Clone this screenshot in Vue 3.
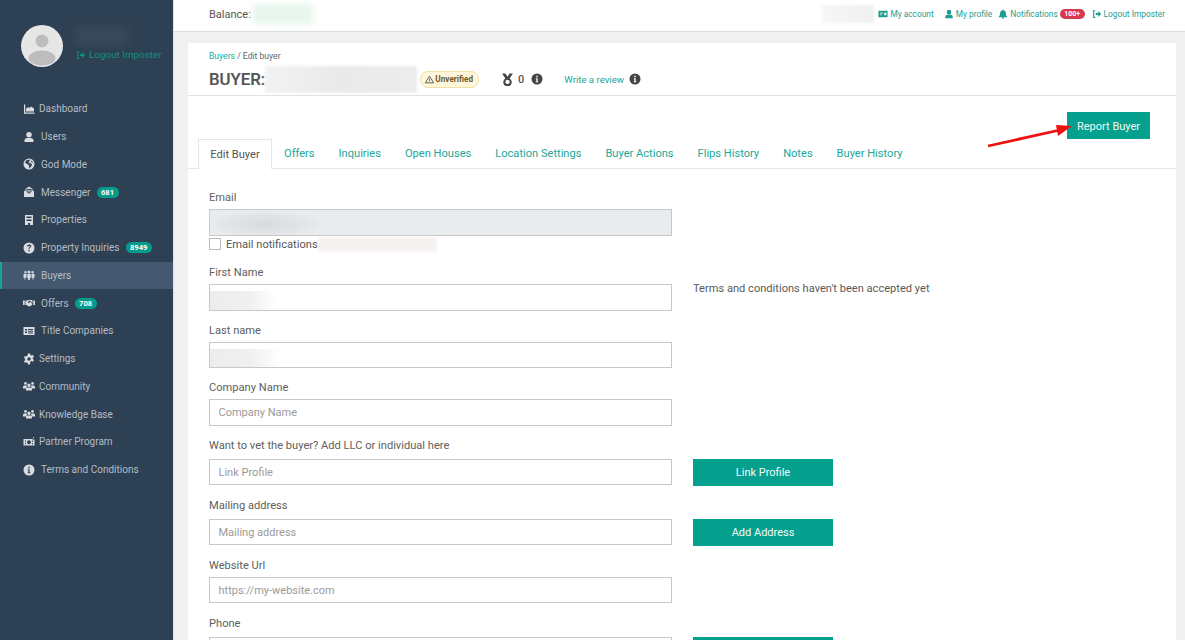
<script setup>
const nav = [
  { label: 'Dashboard', icon: 'chart', tight: true },
  { label: 'Users', icon: 'user' },
  { label: 'God Mode', icon: 'globe' },
  { label: 'Messenger', icon: 'mail', badge: '681' },
  { label: 'Properties', icon: 'building' },
  { label: 'Property Inquiries', icon: 'question', badge: '8949' },
  { label: 'Buyers', icon: 'people', active: true },
  { label: 'Offers', icon: 'handshake', badge: '708' },
  { label: 'Title Companies', icon: 'card' },
  { label: 'Settings', icon: 'cog', tight: true },
  { label: 'Community', icon: 'group', tight: true },
  { label: 'Knowledge Base', icon: 'group', tight: true },
  { label: 'Partner Program', icon: 'money', tight: true },
  { label: 'Terms and Conditions', icon: 'info' },
]
const tabs = ['Offers', 'Inquiries', 'Open Houses', 'Location Settings', 'Buyer Actions', 'Flips History', 'Notes', 'Buyer History']
</script>

<template>
  <div class="app">
    <aside class="sidebar">
      <div class="profile">
        <svg class="avatar" viewBox="0 0 42 42">
          <circle cx="21" cy="21" r="21" fill="#e6e6e6" />
          <circle cx="21" cy="16" r="6.5" fill="#bdbdbd" />
          <ellipse cx="21" cy="33" rx="13.5" ry="7.5" fill="#bdbdbd" />
        </svg>
        <div class="who">
          <span class="blur-name"></span>
          <a class="imposter">
            <svg class="i11" viewBox="0 0 24 24"><path d="M8 4H4v16h4" fill="none" stroke="currentColor" stroke-width="2.6" /><path d="M9 9.5h6V5l7 7-7 7v-4.500H9z" fill="currentColor" /></svg>
            Logout Imposter
          </a>
        </div>
      </div>
      <nav class="nav">
        <a v-for="item in nav" :key="item.label" class="nav-item" :class="{ active: item.active, tight: item.tight }">
          <svg class="nav-icon" viewBox="0 0 24 24" fill="currentColor">
            <path v-if="item.icon === 'chart'" d="M2 3h2.500v16H23v2.500H2zM6 17v-5l4-4 3 2 3-3 6 4v6z" />
            <path v-else-if="item.icon === 'user'" d="M12 2a5.500 5.500 0 1 1 0 11 5.500 5.500 0 0 1 0-11zM3 22v-3c0-3 2.500-5 5-5h8c2.500 0 5 2 5 5v3z" />
            <path v-else-if="item.icon === 'globe'" fill-rule="evenodd" d="M12 1a11 11 0 1 1 0 22 11 11 0 0 1 0-22zM6 5 4 9l4 3 3 1 1 3 1 5 4-5 1-4-5-2-2-2 3-3-1-2zM17 5l-1 3 4 2-1-3z" />
            <path v-else-if="item.icon === 'mail'" fill-rule="evenodd" d="M12 1 19 6v3l3 1.500V22H2V10.500L5 9V6zM7 6v6l5 3.500L17 12V6zM8.500 8h7v1.500h-7zM8.500 11h7v1.500h-7z" />
            <path v-else-if="item.icon === 'building'" fill-rule="evenodd" d="M4 2h16v20h-6v-4h-4v4H4zM7 5v3h10V5zM7 11v3h10v-3z" />
            <path v-else-if="item.icon === 'question'" fill-rule="evenodd" d="M12 1a11 11 0 1 1 0 22 11 11 0 0 1 0-22zM8 9h2.500c.2-1 .8-1.500 1.600-1.500 1 0 1.600.6 1.600 1.300 0 1.500-3 1.700-3 4.700h2.500c0-2 3.300-2.200 3.300-4.900C16.500 6.300 14.500 5 12 5S8.200 6.500 8 9zM10.700 15.500v3h2.600v-3z" />
            <path v-else-if="item.icon === 'people'" d="M5 4a2.500 2.500 0 1 1 0 5 2.500 2.500 0 0 1 0-5zM12 3a3 3 0 1 1 0 6 3 3 0 0 1 0-6zM19 4a2.500 2.500 0 1 1 0 5 2.500 2.500 0 0 1 0-5zM1 10h6v7H5v4H3v-4H1zM8.500 10h7v8h-1.700v4h-3.600v-4H8.500zM17 10h6v7h-2v4h-2v-4h-2z" />
            <path v-else-if="item.icon === 'handshake'" d="M0 7h3.500v9H0zM20.500 7H24v9h-3.500zM5 7h4l3-1.500L14.500 6.500l-5 3.500c0 2 2 2.500 3.500 1l2-1 4 4-1.500 2.500-2 1-2 1.500-2.500-.5L5 15zM15.500 5.500 19 7v5l-4-3.500-1.500-2z" />
            <path v-else-if="item.icon === 'card'" fill-rule="evenodd" d="M1 4h22v16H1zM4 8v3h4V8zM4 13v3h4v-3zM10 8v2h10V8zM10 11.500v2h10v-2zM10 15v2h10v-2z" />
            <path v-else-if="item.icon === 'cog'" fill-rule="evenodd" d="M10 1h4l.7 3 2.500 1.200 2.800-1.400 2 3.400-2.300 2 .1 2.800 2.200 2-2 3.400-2.800-1.300-2.500 1.400L14 23h-4l-.7-3-2.500-1.400-2.800 1.300-2-3.400 2.200-2V12l-2.200-2.800 2-3.400 2.800 1.400L9.300 4zM12 8.500a3.500 3.500 0 1 0 0 7 3.500 3.500 0 0 0 0-7z" />
            <path v-else-if="item.icon === 'group'" d="M5 4a2.800 2.800 0 1 1 0 5.600A2.800 2.800 0 0 1 5 4zM19 4a2.800 2.800 0 1 1 0 5.600A2.800 2.800 0 0 1 19 4zM12 7a3.400 3.400 0 1 1 0 6.800A3.400 3.400 0 0 1 12 7zM0 17v-3c0-2 1.500-3 3-3h4l1 2-2 4zM24 17v-3c0-2-1.500-3-3-3h-4l-1 2 2 4zM6 21v-3c0-2 2-3 3.500-3h5c1.500 0 3.500 1 3.500 3v3z" />
            <path v-else-if="item.icon === 'money'" fill-rule="evenodd" d="M1 6h19l-1 2 4-1v12H1zM12 8.500a4 4 0 1 0 0 8 4 4 0 0 0 0-8zM4 9v2.500h2V9zM4 14v2.500h2V14zM18 9v2.500h2V9zM18 14v2.500h2V14zM20 2h1.500v3H20z" />
            <path v-else fill-rule="evenodd" d="M12 1a11 11 0 1 1 0 22 11 11 0 0 1 0-22zM10.500 5.500v3h3v-3zM9.500 10.500v2h1.200v4H9.500v2h5v-2h-1.200v-6z" />
          </svg>
          <span>{{ item.label }}</span>
          <b v-if="item.badge" class="badge">{{ item.badge }}</b>
        </a>
      </nav>
    </aside>

    <main class="main">
      <header class="topbar">
        <div class="balance">Balance: <span class="blur-balance"></span></div>
        <div class="links">
          <span class="blur-top"></span>
          <a>
            <svg class="i10" viewBox="0 0 24 24" fill="currentColor"><path fill-rule="evenodd" d="M1 4h22v16H1zM5 9v2h7V9zM5 13v2h4v-2zM15 9v6h5V9z" /></svg>
            My account
          </a>
          <a class="gap-profile">
            <svg class="i10" viewBox="0 0 24 24" fill="currentColor"><path d="M12 2a5.500 5.500 0 1 1 0 11 5.500 5.500 0 0 1 0-11zM3 22v-3c0-3 2.500-5 5-5h8c2.500 0 5 2 5 5v3z" /></svg>
            My profile
          </a>
          <a>
            <svg class="i10" viewBox="0 0 24 24" fill="currentColor"><path d="M12 1c1 0 1.500.8 1.500 1.800C17 3.500 19 6.500 19 10c0 4 1 6 3 8v1.500H2V18c2-2 3-4 3-8 0-3.500 2-6.500 5.500-7.200C10.500 1.800 11 1 12 1zM9 20.500h6a3 3 0 0 1-6 0z" /></svg>
            Notifications
            <b class="badge-red">100+</b>
          </a>
          <a class="gap-logout">
            <svg class="i10" viewBox="0 0 24 24"><path d="M8 4H4v16h4" fill="none" stroke="currentColor" stroke-width="2.6" /><path d="M9 9.500h6V5l7 7-7 7v-4.500H9z" fill="currentColor" /></svg>
            Logout Imposter
          </a>
        </div>
      </header>

      <section class="card">
        <div class="head">
          <div class="crumbs"><a>Buyers</a> / Edit buyer</div>
          <div class="title-row">
            <h1>BUYER:</h1>
            <span class="blur-title"></span>
            <span class="pill">
              <svg class="i9" viewBox="0 0 24 24"><path d="M12 3 23 21H1z" fill="none" stroke="currentColor" stroke-width="2.200" /><path d="M11 9h2v6h-2zM11 16.500h2v2h-2z" fill="currentColor" /></svg>
              Unverified
            </span>
            <svg class="medal" viewBox="0 0 24 24" fill="#444"><path d="M2 1h6l4 6 4-6h6l-6 9.300a7.800 7.800 0 1 1-8 0zM12 12.500a4 4 0 1 0 0 8 4 4 0 0 0 0-8z" fill-rule="evenodd" /></svg>
            <span class="count">0</span>
            <svg class="info first-info" viewBox="0 0 24 24" fill="#444"><path fill-rule="evenodd" d="M12 1a11 11 0 1 1 0 22 11 11 0 0 1 0-22zM10.500 5.500v3h3v-3zM9.500 10.500v2h1.200v4H9.500v2h5v-2h-1.200v-6z" /></svg>
            <a class="review">Write a review</a>
            <svg class="info last-info" viewBox="0 0 24 24" fill="#444"><path fill-rule="evenodd" d="M12 1a11 11 0 1 1 0 22 11 11 0 0 1 0-22zM10.500 5.500v3h3v-3zM9.500 10.500v2h1.200v4H9.500v2h5v-2h-1.200v-6z" /></svg>
          </div>
        </div>

        <div class="actions">
          <button class="btn report">Report Buyer</button>
          <svg class="arrow" viewBox="0 0 90 30"><path d="M1 26 73 10" stroke="#f01010" stroke-width="2.800" fill="none" /><path d="M85 6 69 5 71 16z" fill="#f01010" /></svg>
        </div>

        <div class="tabs">
          <a class="tab current">Edit Buyer</a>
          <a v-for="t in tabs" :key="t" class="tab">{{ t }}</a>
        </div>

        <form class="form" @submit.prevent>
          <div class="row h46">
            <div class="field">
              <label>Email</label>
              <div class="input disabled"><span class="blur-email"></span></div>
            </div>
          </div>
          <div class="check-row">
            <span class="check"></span>
            <span>Email notifications</span>
            <span class="blur-check"></span>
          </div>
          <div class="row first">
            <div class="field">
              <label>First Name</label>
              <div class="input"><span class="blur-field w1"></span></div>
            </div>
            <p class="terms">Terms and conditions haven't been accepted yet</p>
          </div>
          <div class="row">
            <div class="field">
              <label>Last name</label>
              <div class="input short"><span class="blur-field w2"></span></div>
            </div>
          </div>
          <div class="row h57">
            <div class="field">
              <label>Company Name</label>
              <input placeholder="Company Name" />
            </div>
          </div>
          <div class="row tall">
            <div class="field">
              <label>Want to vet the buyer? Add LLC or individual here</label>
              <input class="short" placeholder="Link Profile" />
            </div>
            <button class="btn side">Link Profile</button>
          </div>
          <div class="row tall">
            <div class="field">
              <label>Mailing address</label>
              <input class="short" placeholder="Mailing address" />
            </div>
            <button class="btn side">Add Address</button>
          </div>
          <div class="row">
            <div class="field">
              <label>Website Url</label>
              <input class="short" placeholder="https://my-website.com" />
            </div>
          </div>
          <div class="row tall">
            <div class="field">
              <label>Phone</label>
              <input />
            </div>
            <button class="btn side"></button>
          </div>
        </form>
      </section>
    </main>
  </div>
</template>

<style>
html, body { margin: 0; overflow: hidden; }
</style>

<style scoped>
.app {
  display: flex;
  width: 1185px;
  height: 640px;
  overflow: hidden;
  font-family: Roboto, "Liberation Sans", sans-serif;
  color: #565656;
  background: #f0f0f0;
}
a { color: #1aa697; text-decoration: none; }

.sidebar {
  flex: 0 0 173px;
  background: #2e4053;
  color: #b4bdc6;
  border-right: 1px solid #e2e2e2;
}
.profile { display: flex; height: 95px; padding: 25px 0 0 21px; box-sizing: border-box; }
.avatar { width: 42px; height: 42px; flex: none; }
.who { margin-left: 13px; display: flex; flex-direction: column; }
.blur-name { width: 52px; height: 18px; margin: 2px 0 0 0; background: #384a5a; filter: blur(4px); }
.imposter { display: flex; align-items: center; gap: 3px; margin-top: 4px; font-size: 9.9px; color: #12907f; white-space: nowrap; }
.i11 { width: 10px; height: 10px; }

.nav-item {
  display: flex;
  align-items: center;
  height: 27.75px;
  padding-left: 23px;
  color: #b4bdc6;
  font-size: 10px;
  white-space: nowrap;
  box-sizing: border-box;
}
.nav-item.active { background: #44596f; border-left: 2px solid #16a394; padding-left: 21px; }
.nav-icon { width: 12px; height: 12px; flex: none; margin-right: 6px; color: #d9dde1; }
.nav-item.tight .nav-icon { margin-right: 4px; }
.badge {
  margin-left: 6px;
  padding: 0 4.5px;
  height: 11px;
  line-height: 11px;
  border-radius: 6px;
  background: #069c8c;
  color: #fff;
  font-size: 7.6px;
  font-weight: 700;
}

.main { flex: 1; min-width: 0; display: flex; flex-direction: column; }
.topbar {
  flex: none;
  height: 32px;
  box-sizing: border-box;
  background: #fff;
  border-bottom: 1px solid #dcdcdc;
  display: flex;
  align-items: center;
  justify-content: space-between;
  padding: 0 20px 3px 35px;
  font-size: 11px;
}
.balance { display: flex; align-items: center; gap: 2px; }
.blur-balance { width: 60px; height: 20px; background: #e7f5ec; filter: blur(3px); }
.links { display: flex; align-items: center; gap: 6px; font-size: 8.35px; }
.links a { display: flex; align-items: center; gap: 2px; color: #1f9e90; white-space: nowrap; }
.links a.gap-profile { margin-left: 4px; }
.links a.gap-logout { margin-left: 1px; }
.blur-top { width: 52px; height: 18px; margin-right: -2px; background: linear-gradient(90deg, #f7f7f7, #f0f0f0); filter: blur(1px); }
.i10 { width: 10px; height: 10px; flex: none; }
.badge-red {
  padding: 0 4.5px;
  height: 10px;
  line-height: 10px;
  border-radius: 5px;
  background: #d9374f;
  color: #fff;
  font-size: 7px;
}

.card {
  position: relative;
  margin: 11px 9px 0 14px;
  background: #fff;
  flex: 1;
  min-height: 0;
  overflow: hidden;
}
.head { height: 53px; box-sizing: border-box; padding: 8px 0 0 21px; border-bottom: 1px solid #e3e3e3; }
.crumbs { font-size: 8.6px; line-height: 11px; color: #666; }
.title-row { display: flex; align-items: center; height: 28px; margin-top: 3px; }
h1 { margin: 0; font-size: 16.8px; font-weight: 500; color: #555; -webkit-text-stroke: 0.2px #555; }
.blur-title { width: 152px; height: 27px; background: linear-gradient(90deg, #f2f2f2, #e9e9e9 50%, #ececec); filter: blur(1.5px); }
.pill {
  display: flex;
  align-items: center;
  gap: 1px;
  margin-left: 3px;
  height: 15px;
  padding: 0 5px 0 4px;
  border: 1px solid #f2dfa6;
  background: #fff6dc;
  border-radius: 8px;
  font-size: 8.2px;
  font-weight: 700;
  color: #6d5b2e;
  white-space: nowrap;
}
.i9 { width: 9px; height: 9px; color: #444; }
.medal { width: 13px; height: 13px; margin-left: 22px; }
.count { margin-left: 4px; font-size: 11px; font-weight: 500; }
.info { width: 12px; height: 12px; margin-left: 6px; }
.first-info { margin-left: 7px; }
.last-info { margin-left: 5px; }
.review { margin-left: 21px; font-size: 9.6px; white-space: nowrap; }

.actions { display: flex; justify-content: flex-end; position: relative; padding: 16px 26px 0 0; height: 27px; }
.btn {
  border: 0;
  background: #06a08f;
  color: #f2fbfa;
  font: 400 11px Roboto, "Liberation Sans", sans-serif;
  padding: 0;
}
.report { width: 83px; height: 27px; padding-top: 1px; }
.arrow { position: absolute; left: 799px; top: 24px; width: 90px; height: 30px; }

.tabs { display: flex; height: 29px; padding-left: 10px; border-bottom: 1px solid #e6e6e6; font-size: 11.1px; }
.tab { display: flex; align-items: center; padding: 0 12px; color: #21a797; white-space: nowrap; }
.tab.current { width: 74px; height: 30px; box-sizing: border-box; color: #555; background: #fff; border: 1px solid #e6e6e6; border-bottom: 0; justify-content: center; padding: 0; }

.form { padding: 21px 0 0 21px; font-size: 11.12px; }
.row { display: flex; align-items: flex-end; gap: 21px; height: 58px; }
.row.h46 { height: 46px; }
.row.h57 { height: 57px; }
.row.first { height: 60px; }
.row.tall { height: 60px; }
.field { width: 463px; flex: none; }
label { display: block; height: 17px; line-height: 12px; color: #606060; white-space: nowrap; }
.row.tall label { height: 19px; }
.input, input {
  display: block;
  width: 100%;
  height: 27px;
  box-sizing: border-box;
  border: 1px solid #c8c8c8;
  background: #fff;
  font: 11px Roboto, "Liberation Sans", sans-serif;
  padding: 0 8.5px;
  overflow: hidden;
}
.input.short, input.short { height: 26px; margin-bottom: 1px; }
input::placeholder { color: #9a9a9a; opacity: 1; }
.input { display: flex; align-items: center; padding: 0; }
.input.disabled { background: #e9ecef; }
.blur-email { width: 110px; height: 24px; margin-left: 0; background: radial-gradient(ellipse at 50% 55%, #d8dbde 0, #e2e5e8 50%, #e9ecef 75%); }
.blur-field { height: 19px; margin-top: 6px; background: linear-gradient(90deg, #ececec, #f0f0f0 60%, #fff); }
.w1 { width: 66px; }
.w2 { width: 70px; }
.check-row { display: flex; align-items: center; height: 14px; margin-top: 1px; }
.check { width: 10px; height: 10px; border: 1px solid #bbb; margin-right: 5px; }
.blur-check { width: 119px; height: 15px; background: #f7f2f2; filter: blur(1px); }
.terms { margin: 0 0 16px; font-size: 11.1px; white-space: nowrap; color: #5a5a5a; }
.btn.side { width: 140px; height: 27px; flex: none; }
</style>
